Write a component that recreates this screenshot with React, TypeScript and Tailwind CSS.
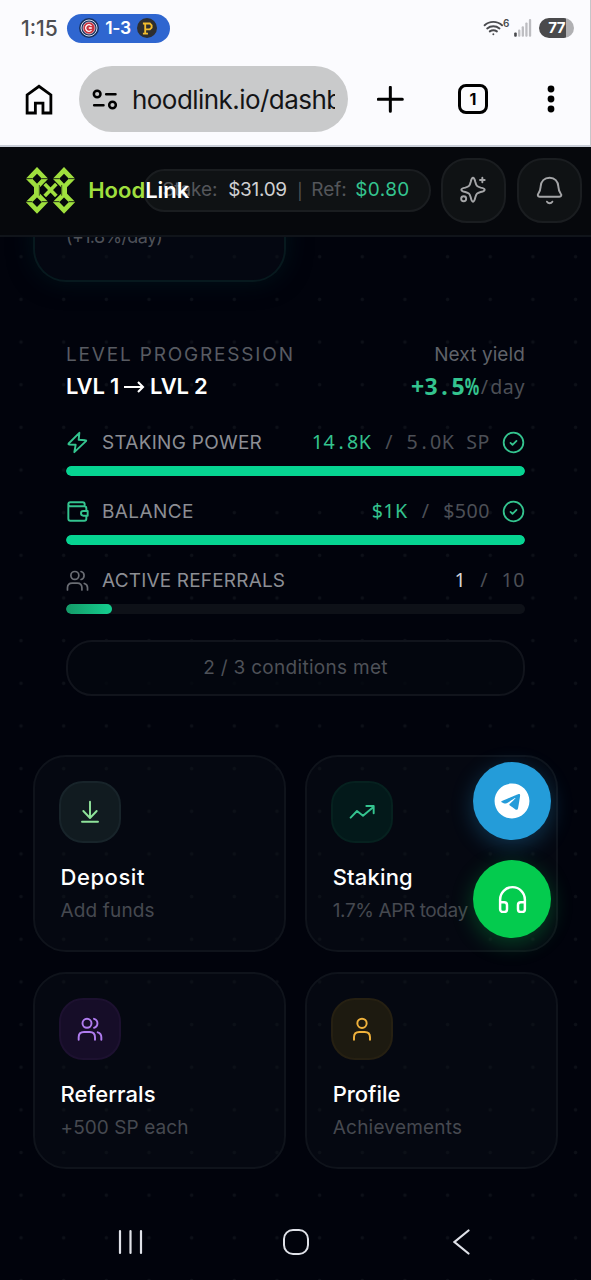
import type { ReactNode } from "react";
import { Headphones } from "lucide-react";
import { FaTelegram } from "react-icons/fa6";

type IconProps = { box: string; className: string; children: ReactNode; sw?: number };

function Icon({ box, className, children, sw = 5.8 }: IconProps) {
  return (
    <svg
      viewBox={box}
      className={`shrink-0 ${className}`}
      fill="none"
      stroke="currentColor"
      strokeWidth={sw}
      strokeLinecap="round"
      strokeLinejoin="round"
    >
      {children}
    </svg>
  );
}

const Users = ({ className, sw }: { className: string; sw?: number }) => (
  <Icon box="171 168 78 78" className={className} sw={sw}>
    <circle cx="201" cy="190" r="13.5" />
    <path d="M222 176.500a14 14 0 0 1 0 27" />
    <path d="M176 239v-7c0-10 6-16 16-16h17c10 0 16 6 16 16v7" />
    <path d="M233 217c7 2 11 8 11 15v7" />
  </Icon>
);

const Check = () => (
  <Icon box="636.5 305.500 69 69" className="ml-[12px] size-[23px] text-[#34c48f]" sw={5.4}>
    <circle cx="671" cy="340" r="29.500" />
    <path d="M662 341l6 6 12-12" />
  </Icon>
);

function Mono({ children }: { children: string }) {
  return (
    <>
      {children.split(/([./+%$ ])/).map((part, i) =>
        /^[./+%$ ]$/.test(part) ? (
          <span
            key={i}
            className={`inline-flex w-[0.6em] justify-center whitespace-pre tracking-normal ${part === "%" ? "scale-x-[0.7]" : ""}`}
          >
            {part}
          </span>
        ) : (
          part
        ),
      )}
    </>
  );
}

function StatusBar() {
  return (
    <div className="flex h-[56px] items-center pl-[21px] pr-[16px]">
      <span className="w-[46px] pt-px text-[21px] font-medium text-[#4d4e52]">1:15</span>
      <div className="flex h-[29px] w-[103px] items-center rounded-full bg-[#2f66d0] pl-[12px]">
        <svg viewBox="0 0 20 20" className="size-[20px]">
          <circle cx="10" cy="10" r="10" fill="#16305f" />
          <circle cx="10" cy="10" r="8" fill="none" stroke="#e8ecf5" strokeWidth="0.900" />
          <circle cx="10" cy="10" r="6" fill="#c9333f" stroke="#f3d9dd" strokeWidth="0.700" />
          <path d="M12.500 7.900a3.300 3.300 0 1 0 0 4.200M12.800 10h-3" fill="none" stroke="#fff" strokeWidth="1.300" />
        </svg>
        <span className="w-[38px] pt-px text-center text-[17.500px] font-semibold tracking-[-0.3px] text-white">1-3</span>
        <span className="flex size-[20px] items-center justify-center rounded-full bg-[#2d2e30]">
          <svg viewBox="0 0 12 14" className="h-[13px] w-[11px]" fill="none" stroke="#f3bd2e" strokeWidth="2">
            <path d="M1 1.500H8.500L10.500 3.500V6L8.500 8H4M3.500 1.500V12.500M1 12.500H6.500" />
          </svg>
        </span>
      </div>
      <div className="ml-auto flex items-center">
        <Icon box="575 55 65 52" className="h-[17px] w-[21px] text-[#4a4b4f]" sw={6}>
          <path d="M580 71c15-14 39-14 54 0M588 81c11-9 27-9 38 0M596 90c7-5 15-5 22 0" />
          <circle cx="607" cy="99" r="3" fill="currentColor" stroke="none" />
        </Icon>
        <span className="-ml-px -mt-[9px] w-[9px] text-[10px] font-semibold text-[#4a4b4f]">6</span>
        <svg viewBox="669 57 54 55" className="ml-[2px] h-[18px] w-[18px]">
          <rect x="669" y="98" width="8" height="13" rx="3" fill="#4a4b4f" />
          <rect x="681" y="89" width="7" height="22" rx="3" fill="#bdbdc1" />
          <rect x="692" y="79" width="7" height="32" rx="3" fill="#bdbdc1" />
          <rect x="703" y="68" width="7" height="43" rx="3" fill="#bdbdc1" />
          <rect x="714" y="57" width="7" height="54" rx="3" fill="#bdbdc1" />
        </svg>
        <span className="ml-[7px] flex h-[20px] w-[35px] items-center justify-center rounded-full bg-[linear-gradient(90deg,#4a4a4c_77%,#b0b0b3_77%)] text-[15px] font-bold tracking-[-0.5px] text-white">
          77
        </span>
      </div>
    </div>
  );
}

function BrowserBar() {
  return (
    <div className="flex h-[90px] items-center pb-[4px] pl-[25px] text-black">
      <Icon box="76 250 84 94" className="h-[31px] w-[28px]" sw={8.5}>
        <path strokeLinejoin="miter" d="M82 338V283L118 257L154 283V338H130V308H107V338Z" />
      </Icon>
      <div className="ml-[26px] flex h-[66px] w-[269px] items-center rounded-full bg-[#c9cacb] pl-[13px]">
        <Icon box="277 262 77 69" className="h-[23px] w-[26px]" sw={7.5}>
          <circle cx="292" cy="280" r="10" />
          <path d="M319 281h28M283 314h28" />
          <circle cx="338" cy="313" r="10" />
        </Icon>
        <div className="ml-[14px] w-[203px] overflow-hidden whitespace-nowrap text-[26px] tracking-[-0.55px] text-[#141416]">
          hoodlink.io/dashboard
        </div>
      </div>
      <Icon box="258 257 81 81" className="ml-[29px] size-[27px]" sw={9}>
        <path d="M298 261V333M262 297H334" />
      </Icon>
      <div className="ml-[54px] flex size-[30px] items-center justify-center rounded-[8px] border-[3px] border-black text-[16px] font-bold">
        1
      </div>
      <svg viewBox="0 0 8 28" className="ml-[59px] h-[28px] w-[8px]" fill="currentColor">
        <circle cx="4" cy="4" r="3.400" />
        <circle cx="4" cy="14" r="3.400" />
        <circle cx="4" cy="24" r="3.400" />
      </svg>
    </div>
  );
}

function LogoColumn({ x }: { x: number }) {
  return (
    <g transform={`translate(${x} 0)`}>
      <path
        d="M0 76L24 101L0 126L-24 101ZM0 147L24 171L0 196L-24 171Z"
        fill="none"
        stroke="#9fdf3e"
        strokeWidth="14"
      />
      <path d="M-9 119H9V153H-9Z" fill="#9fdf3e" />
      <path d="M-36 101H-14M14 101H36M-36 170H-14M14 170H36" stroke="#06080c" strokeWidth="2.500" />
    </g>
  );
}

function Logo() {
  return (
    <svg viewBox="80 66 146 141" className="h-[47px] w-[48.700px] shrink-0">
      <LogoColumn x={113} />
      <LogoColumn x={194} />
      <path d="M120 120V152M187 120V152" stroke="#06080c" strokeWidth="2" />
      <path d="M136 117L171 153M171 117L136 153" stroke="#9fdf3e" strokeWidth="11" />
    </svg>
  );
}

function Header() {
  return (
    <header className="relative z-10 flex h-[90px] items-center border-b-2 border-[#10141a] bg-[#06080c] pb-[1px] pl-[26px]">
      <Logo />
      <div className="z-10 ml-[13.500px] w-[55px] whitespace-nowrap text-[22px] font-semibold text-white">
        <span className="text-[#9fdf3e]">Hood</span>Link
      </div>
      <div className="flex h-[43px] w-[288px] shrink-0 items-center rounded-full border-2 border-[#1a1d20] bg-[#0f1214] pl-[17px] text-[19px] text-[#54565a]">
        <span className="w-[66px] tracking-[-0.1px]">Stake:</span>
        <span className="w-[69px] tracking-[-0.3px] text-[#cfd0d2]">$31.09</span>
        <span className="w-[14px] text-[16px]">|</span>
        <span className="w-[44px]">Ref:</span>
        <span className="tracking-[0.4px] text-[#34c48f]">$0.80</span>
      </div>
      <div className="mb-px ml-[10px] flex size-[65px] shrink-0 items-center justify-center rounded-[26px] border-2 border-[#1a1d20] bg-[#0f1214] text-[#a5a6a8]">
        <Icon box="508 94 80 84" className="h-[28px] w-[26.700px]">
          <path d="M547 99c4 0 5 4 7 13c3 12 5 14 16 17c9 2 12 3 12 6s-3 5-12 7c-11 3-13 5-16 16c-2 9-3 13-7 13s-5-4-7-13c-3-11-5-13-16-16c-9-2-12-4-12-7s3-4 12-6c11-3 13-5 16-17c2-9 3-13 7-13Z" />
          <path d="M575 99v14M568 106h14" />
          <circle cx="519" cy="162" r="7.500" />
        </Icon>
      </div>
      <div className="mb-px ml-[11px] flex size-[65px] shrink-0 items-center justify-center rounded-[26px] border-2 border-[#1a1d20] bg-[#0f1214] text-[#a5a6a8]">
        <Icon box="734 93 81 87" className="h-[29px] w-[27px]">
          <path d="M775 98c-16 0-26 11-27 26c-1 12-1 15-7 22c-3 4-2 9 4 9h59c6 0 8-5 4-9c-6-7-6-10-7-22c-1-15-11-26-26-26Z" />
          <path d="M767 170c4 6 12 6 16 0" />
        </Icon>
      </div>
    </header>
  );
}

type RowProps = { icon: ReactNode; label: string; value: string; goal: string; done?: boolean; pct: number; spacing: string };

function ProgressRow({ icon, label, value, goal, done, pct, spacing }: RowProps) {
  return (
    <div className="h-[69px]">
      <div className="flex h-[28px] items-center text-[19px]">
        {icon}
        <span className={`ml-[13px] pt-[2px] text-[#8c8e94] ${spacing}`}>{label}</span>
        <span className="ml-auto flex font-['Noto_Sans',sans-serif] text-[19.600px] tracking-[0.55px] text-[#4c4f56]">
          <span className={done ? "text-[#34c48f]" : "text-[#d5d6d8]"}>
            <Mono>{value}</Mono>
          </span>
          <span>
            <Mono>{` / ${goal}`}</Mono>
          </span>
        </span>
        {done && <Check />}
      </div>
      <div className="mt-[10px] h-[10px] overflow-hidden rounded-full bg-[#0e1118]">
        <div
          className={`h-full rounded-full ${done ? "bg-[#06d492]" : "bg-linear-to-r from-[#149a68] to-[#14cf90]"}`}
          style={{ width: `${pct}%` }}
        />
      </div>
    </div>
  );
}

function LevelPanel() {
  return (
    <section className="mx-[66px] mt-[58px] w-[459px]">
      <div className="flex h-[28px] items-center justify-between pt-[2px] text-[19px]">
        <span className="tracking-[1.82px] text-[#585b62]">LEVEL PROGRESSION</span>
        <span className="tracking-[0.100px] text-[#5f6269]">Next yield</span>
      </div>
      <div className="mt-[4px] flex h-[30px] items-center justify-between pb-px">
        <span className="flex items-center text-[22px] font-semibold tracking-[-0.200px] text-white">
          LVL 1
          <svg viewBox="0 0 21 14" className="mx-[5px] h-[14px] w-[21px]" fill="none" stroke="currentColor" strokeWidth="2.100">
            <path d="M0 7h19M14 2L19 7L14 12" />
          </svg>
          LVL 2
        </span>
        <span className="flex items-center font-['Noto_Sans',sans-serif]">
          <span className="text-[23px] font-bold text-[#34c48f]">
            <Mono>+3.5%</Mono>
          </span>
          <span className="text-[19.600px] tracking-[0.6px] text-[#4c4f56]">
            <Mono>/day</Mono>
          </span>
        </span>
      </div>
      <div className="mt-[26px]">
        <ProgressRow
          icon={
            <Icon box="107 305.500 69 69" className="size-[23px] text-[#34c48f]">
              <path d="M147 311L115 343Q113 346 117 346L136 347L132 369L167 336Q169 333 165 333L145 332Z" />
            </Icon>
          }
          label="STAKING POWER"
          spacing="tracking-[0.26px]"
          value="14.8K"
          goal="5.0K SP"
          done
          pct={100}
        />
        <ProgressRow
          icon={
            <Icon box="107 512 69 69" className="size-[23px] text-[#34c48f]">
              <path d="M163 531V525a6 6 0 0 0-6-6H120a6 6 0 0 0 0 12H162a6 6 0 0 1 6 6V544M168 560V568a6 6 0 0 1-6 6H120a6 6 0 0 1-6-6V525" />
              <path d="M172 545H159a7 7 0 0 0 0 14H172Z" />
            </Icon>
          }
          label="BALANCE"
          spacing="tracking-[0.4px]"
          value="$1K"
          goal="$500"
          done
          pct={100}
        />
        <ProgressRow
          icon={<Users className="size-[23px] text-[#6a6d74]" />}
          label="ACTIVE REFERRALS"
          spacing="tracking-[0.18px]"
          value="1"
          goal="10"
          pct={10}
        />
      </div>
      <div className="mt-[5px] flex h-[56px] items-center justify-center rounded-[26px] border-2 border-[#11141c] bg-[#04070f]/80 text-[19px] tracking-[0.3px] text-[#4e5158]">
        2 / 3 conditions met
      </div>
    </section>
  );
}

type CardProps = { tone: string; icon: ReactNode; title: string; sub: string; titleSpacing: string; subSpacing: string };

function ActionCard({ tone, icon, title, sub, titleSpacing, subSpacing }: CardProps) {
  return (
    <div className="h-[196.500px] rounded-[33px] border-2 border-[#0f131b] bg-[#0c121a]/40 pl-[24px] pt-[24px]">
      <div className={`flex size-[62px] items-center justify-center rounded-[24px] border-2 ${tone}`}>{icon}</div>
      <div className={`ml-[1.500px] mt-[17px] flex h-[34px] items-center text-[22px] font-medium text-white ${titleSpacing}`}>{title}</div>
      <div className={`ml-[1.500px] mt-[2px] flex h-[30px] items-center text-[19px] text-[#464950] ${subSpacing}`}>{sub}</div>
    </div>
  );
}

function Actions() {
  return (
    <section className="mx-[33px] mt-[59px] grid grid-cols-2 gap-x-[19.500px] gap-y-[20.500px]">
      <ActionCard
        tone="border-[#18242a] bg-[#111b20] text-[#8fe39a]"
        title="Deposit"
        sub="Add funds"
        titleSpacing="tracking-[0.55px]"
        subSpacing="tracking-[0.150px]"
        icon={
          <Icon box="172 163 78 78" className="size-[26px]">
            <path d="M211 171V219M191 199L211 220L231 199M187 231H235" />
          </Icon>
        }
      />
      <ActionCard
        tone="border-[#06211f] bg-[#03191a] text-[#34c48f]"
        title="Staking"
        sub="1.7% APR today"
        titleSpacing="tracking-[0.150px]"
        subSpacing="tracking-[-0.400px]"
        icon={
          <Icon box="164 163 78 78" className="size-[26px]">
            <path d="M169 219L188 199L206 213L238 186M216 184H238V206" />
          </Icon>
        }
      />
      <ActionCard
        tone="border-[#1d1130] bg-[#160d28] text-[#b07cf0]"
        title="Referrals"
        sub="+500 SP each"
        titleSpacing="tracking-[0.05px]"
        subSpacing="tracking-[0.080px]"
        icon={<Users className="size-[26px]" />}
      />
      <ActionCard
        tone="border-[#262012] bg-[#1d1a10] text-[#f0b23c]"
        title="Profile"
        sub="Achievements"
        titleSpacing="tracking-[-0.05px]"
        subSpacing="tracking-[0.220px]"
        icon={
          <Icon box="164 168 78 78" className="size-[26px]">
            <circle cx="203" cy="190" r="14" />
            <path d="M179 239v-7c0-10 6-16 16-16h16c10 0 16 6 16 16v7" />
          </Icon>
        }
      />
    </section>
  );
}

function SystemNav() {
  return (
    <nav className="mt-auto flex h-[77px] items-center justify-between pl-[118px] pr-[121px] text-[#dfe1e8]">
      <svg viewBox="0 0 25 26" className="h-[26px] w-[25px]" stroke="currentColor" strokeWidth="2.200" strokeLinecap="round">
        <path d="M2 2V24M12.500 2V24M23 2V24" />
      </svg>
      <div className="-ml-[5px] size-[26px] rounded-[10px] border-2 border-current" />
      <svg viewBox="0 0 17 26" className="h-[26px] w-[17px]" fill="none" stroke="currentColor" strokeWidth="2.200" strokeLinecap="round">
        <path d="M15.500 1.500L1.500 13L15.500 24.500" />
      </svg>
    </nav>
  );
}

export default function App() {
  return (
    <div className="relative flex h-[1280px] w-[591px] flex-col overflow-hidden bg-[#01030c] font-['Inter',sans-serif]">
      <div className="h-[147px] shrink-0 border-b-2 border-r border-b-[#c9ced8] border-r-[#c6c6c9] bg-[#fbfbfe]">
        <StatusBar />
        <BrowserBar />
      </div>
      <Header />
      <main className="flex flex-1 flex-col overflow-hidden bg-[radial-gradient(circle,#0d1018_1.300px,transparent_2.200px)] bg-[size:42.670px_42.670px] bg-[position:-0.300px_-1.600px]">
        <div className="ml-[33px] -mt-[30px] h-[75px] w-[253px] rounded-b-[33px] border-2 border-t-0 border-[#07191e] bg-[#0a1018]/40 pl-[31px] pt-[16px] text-[18px] tracking-[-0.65px] text-[#4e5158] shadow-[0_0_24px_#04202580]">
          (+1.8%/day)
        </div>
        <LevelPanel />
        <Actions />
        <SystemNav />
      </main>
      <div className="absolute left-[473px] top-[762px] z-20 flex flex-col gap-[20px] text-white">
        <div className="flex size-[78px] items-center justify-center rounded-full bg-[#249cd9] shadow-[0_6px_22px_#249cd94d]">
          <FaTelegram className="size-[36px]" />
        </div>
        <div className="flex size-[78px] items-center justify-center rounded-full bg-[#04cb4e] shadow-[0_6px_22px_#04cb4e4d]">
          <Headphones className="size-[33px]" strokeWidth={1.800} />
        </div>
      </div>
    </div>
  );
}
